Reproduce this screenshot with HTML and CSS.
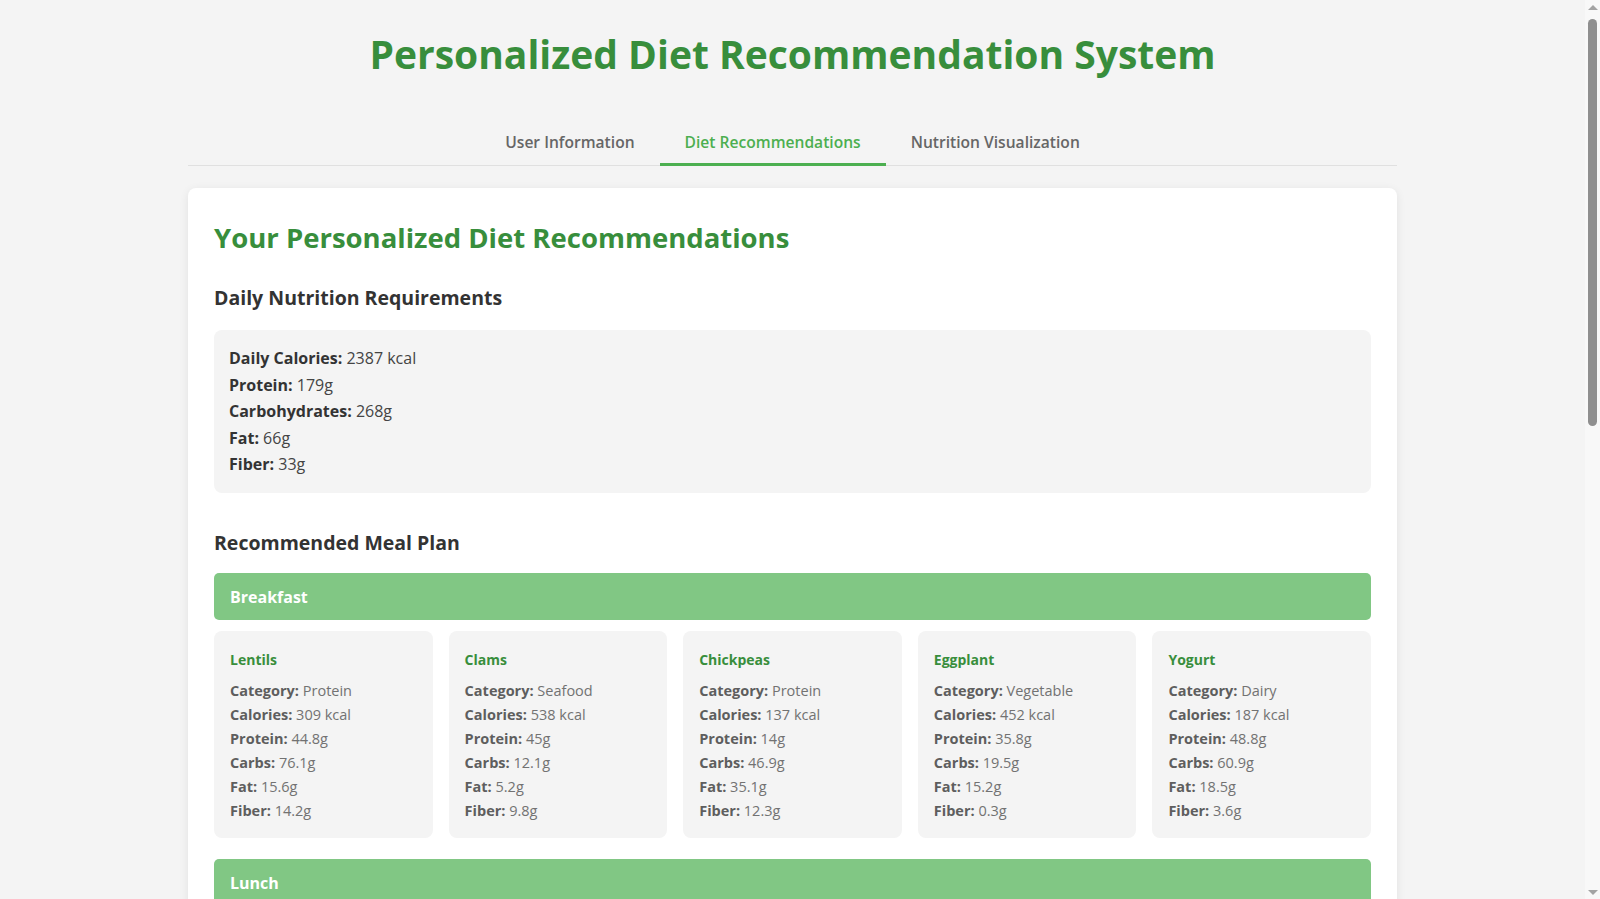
FILE: index.html
```html
<!DOCTYPE html>
<html lang="en">
<head>
<meta charset="utf-8">
<title>Personalized Diet Recommendation System</title>
<link rel="stylesheet" href="styles.css">
</head>
<body>
<div class="container">
  <h1 class="app-title">Personalized Diet Recommendation System</h1>
  <nav class="tabs">
    <button class="tab">User Information</button>
    <button class="tab active">Diet Recommendations</button>
    <button class="tab">Nutrition Visualization</button>
  </nav>
  <main class="panel">
    <h2 class="panel-title">Your Personalized Diet Recommendations</h2>
    <h3 class="section-title">Daily Nutrition Requirements</h3>
    <div class="nutrition-box">
      <p><strong>Daily Calories:</strong> 2387 kcal</p>
      <p><strong>Protein:</strong> 179g</p>
      <p><strong>Carbohydrates:</strong> 268g</p>
      <p><strong>Fat:</strong> 66g</p>
      <p><strong>Fiber:</strong> 33g</p>
    </div>
    <h3 class="section-title meal-plan-title">Recommended Meal Plan</h3>

    <section class="meal">
      <div class="meal-header">Breakfast</div>
      <div class="food-grid">
        <div class="food-card">
          <h4 class="food-name">Lentils</h4>
          <p><strong>Category:</strong> Protein</p>
          <p><strong>Calories:</strong> 309 kcal</p>
          <p><strong>Protein:</strong> 44.8g</p>
          <p><strong>Carbs:</strong> 76.1g</p>
          <p><strong>Fat:</strong> 15.6g</p>
          <p><strong>Fiber:</strong> 14.2g</p>
        </div>
        <div class="food-card">
          <h4 class="food-name">Clams</h4>
          <p><strong>Category:</strong> Seafood</p>
          <p><strong>Calories:</strong> 538 kcal</p>
          <p><strong>Protein:</strong> 45g</p>
          <p><strong>Carbs:</strong> 12.1g</p>
          <p><strong>Fat:</strong> 5.2g</p>
          <p><strong>Fiber:</strong> 9.8g</p>
        </div>
        <div class="food-card">
          <h4 class="food-name">Chickpeas</h4>
          <p><strong>Category:</strong> Protein</p>
          <p><strong>Calories:</strong> 137 kcal</p>
          <p><strong>Protein:</strong> 14g</p>
          <p><strong>Carbs:</strong> 46.9g</p>
          <p><strong>Fat:</strong> 35.1g</p>
          <p><strong>Fiber:</strong> 12.3g</p>
        </div>
        <div class="food-card">
          <h4 class="food-name">Eggplant</h4>
          <p><strong>Category:</strong> Vegetable</p>
          <p><strong>Calories:</strong> 452 kcal</p>
          <p><strong>Protein:</strong> 35.8g</p>
          <p><strong>Carbs:</strong> 19.5g</p>
          <p><strong>Fat:</strong> 15.2g</p>
          <p><strong>Fiber:</strong> 0.3g</p>
        </div>
        <div class="food-card">
          <h4 class="food-name">Yogurt</h4>
          <p><strong>Category:</strong> Dairy</p>
          <p><strong>Calories:</strong> 187 kcal</p>
          <p><strong>Protein:</strong> 48.8g</p>
          <p><strong>Carbs:</strong> 60.9g</p>
          <p><strong>Fat:</strong> 18.5g</p>
          <p><strong>Fiber:</strong> 3.6g</p>
        </div>
      </div>
    </section>

    <section class="meal">
      <div class="meal-header">Lunch</div>
      <div class="food-grid">
        <div class="food-card">
          <h4 class="food-name">Chicken Breast</h4>
          <p><strong>Category:</strong> Protein</p>
          <p><strong>Calories:</strong> 165 kcal</p>
          <p><strong>Protein:</strong> 31g</p>
          <p><strong>Carbs:</strong> 0g</p>
          <p><strong>Fat:</strong> 3.6g</p>
          <p><strong>Fiber:</strong> 0g</p>
        </div>
        <div class="food-card">
          <h4 class="food-name">Brown Rice</h4>
          <p><strong>Category:</strong> Grain</p>
          <p><strong>Calories:</strong> 216 kcal</p>
          <p><strong>Protein:</strong> 5g</p>
          <p><strong>Carbs:</strong> 45g</p>
          <p><strong>Fat:</strong> 1.8g</p>
          <p><strong>Fiber:</strong> 3.5g</p>
        </div>
        <div class="food-card">
          <h4 class="food-name">Broccoli</h4>
          <p><strong>Category:</strong> Vegetable</p>
          <p><strong>Calories:</strong> 55 kcal</p>
          <p><strong>Protein:</strong> 3.7g</p>
          <p><strong>Carbs:</strong> 11.2g</p>
          <p><strong>Fat:</strong> 0.6g</p>
          <p><strong>Fiber:</strong> 5.1g</p>
        </div>
        <div class="food-card">
          <h4 class="food-name">Spinach</h4>
          <p><strong>Category:</strong> Vegetable</p>
          <p><strong>Calories:</strong> 23 kcal</p>
          <p><strong>Protein:</strong> 2.9g</p>
          <p><strong>Carbs:</strong> 3.6g</p>
          <p><strong>Fat:</strong> 0.4g</p>
          <p><strong>Fiber:</strong> 2.2g</p>
        </div>
        <div class="food-card">
          <h4 class="food-name">Almonds</h4>
          <p><strong>Category:</strong> Nuts</p>
          <p><strong>Calories:</strong> 579 kcal</p>
          <p><strong>Protein:</strong> 21.2g</p>
          <p><strong>Carbs:</strong> 21.6g</p>
          <p><strong>Fat:</strong> 49.9g</p>
          <p><strong>Fiber:</strong> 12.5g</p>
        </div>
      </div>
    </section>
  </main>
</div>

<div class="scrollbar" aria-hidden="true">
  <span class="sb-arrow sb-up"></span>
  <span class="sb-thumb"></span>
  <span class="sb-arrow sb-down"></span>
</div>
</body>
</html>
```

FILE: styles.css
```css
* { box-sizing: border-box; }

body {
  margin: 0;
  padding-right: 15px;
  background: #f4f4f4;
  color: #333;
  font-family: "Open Sans", "Noto Sans", "Liberation Sans", sans-serif;
  font-size: 16px;
}

.container {
  max-width: 1209px;
  margin: 0 auto;
  padding-bottom: 40px;
}

.app-title {
  margin: 0;
  padding: 29px 0 0;
  height: 122px;
  text-align: center;
  color: #388e3c;
  font-size: 39px;
  font-weight: 700;
  line-height: 50px;
}

.tabs {
  display: flex;
  justify-content: center;
  border-bottom: 1px solid #e0e0e0;
}

.tab {
  background: none;
  border: none;
  border-bottom: 3px solid transparent;
  margin-bottom: -1px;
  padding: 9px 25px 10px;
  font-family: inherit;
  font-size: 15.6px;
  font-weight: 600;
  color: #666;
  cursor: pointer;
}

.tab.active {
  color: #4caf50;
  border-bottom-color: #4caf50;
}

.panel {
  margin-top: 22px;
  background: #fff;
  border-radius: 8px;
  box-shadow: 0 2px 10px rgba(0, 0, 0, 0.08);
  padding: 26px 26px 30px;
}

.panel-title {
  margin: 6px 0 0;
  color: #388e3c;
  font-size: 27.5px;
  font-weight: 700;
  line-height: 36px;
}

.section-title {
  margin: 28px 0 0;
  color: #333;
  font-size: 19.5px;
  font-weight: 700;
  line-height: 28px;
}

.nutrition-box {
  margin-top: 18px;
  background: #f4f4f4;
  border-radius: 8px;
  padding: 15px;
  color: #444;
}

.nutrition-box strong {
  color: #333;
}

.nutrition-box p {
  margin: 0;
  line-height: 26.5px;
}

.meal-plan-title {
  margin-top: 36px;
}

.meal {
  margin-top: 16.5px;
}

.meal + .meal {
  margin-top: 21px;
}

.meal-header {
  background: #81c784;
  color: #fff;
  font-weight: 700;
  font-size: 16px;
  border-radius: 5px;
  padding: 2px 16px 0;
  height: 47px;
  line-height: 45px;
}

.food-grid {
  margin-top: 11px;
  display: grid;
  grid-template-columns: repeat(5, 1fr);
  gap: 16px;
}

.food-card {
  background: #f4f4f4;
  border-radius: 8px;
  padding: 17px 16px 15px;
  color: #727272;
  font-size: 14.5px;
}

.food-name {
  margin: 2px 0 10px;
  color: #388e3c;
  font-size: 14px;
  font-weight: 700;
}

.food-card p {
  margin: 0;
  line-height: 24px;
}

.food-card strong {
  color: #5e5e5e;
}

/* visual replica of the browser scrollbar in the reference */
.scrollbar {
  position: fixed;
  top: 0;
  right: 0;
  width: 15px;
  height: 100vh;
  background: #f8f8f8;
  display: flex;
  flex-direction: column;
  align-items: center;
}

.sb-arrow {
  width: 0;
  height: 0;
  border-left: 5px solid transparent;
  border-right: 5px solid transparent;
}

.sb-up {
  margin-top: 5px;
  border-bottom: 5px solid #a3a3a3;
}

.sb-down {
  margin-top: auto;
  margin-bottom: 4px;
  border-top: 5px solid #a3a3a3;
}

.sb-thumb {
  margin-top: 9px;
  width: 9px;
  height: 407px;
  border-radius: 5px;
  background: #8f8f8f;
}
```
